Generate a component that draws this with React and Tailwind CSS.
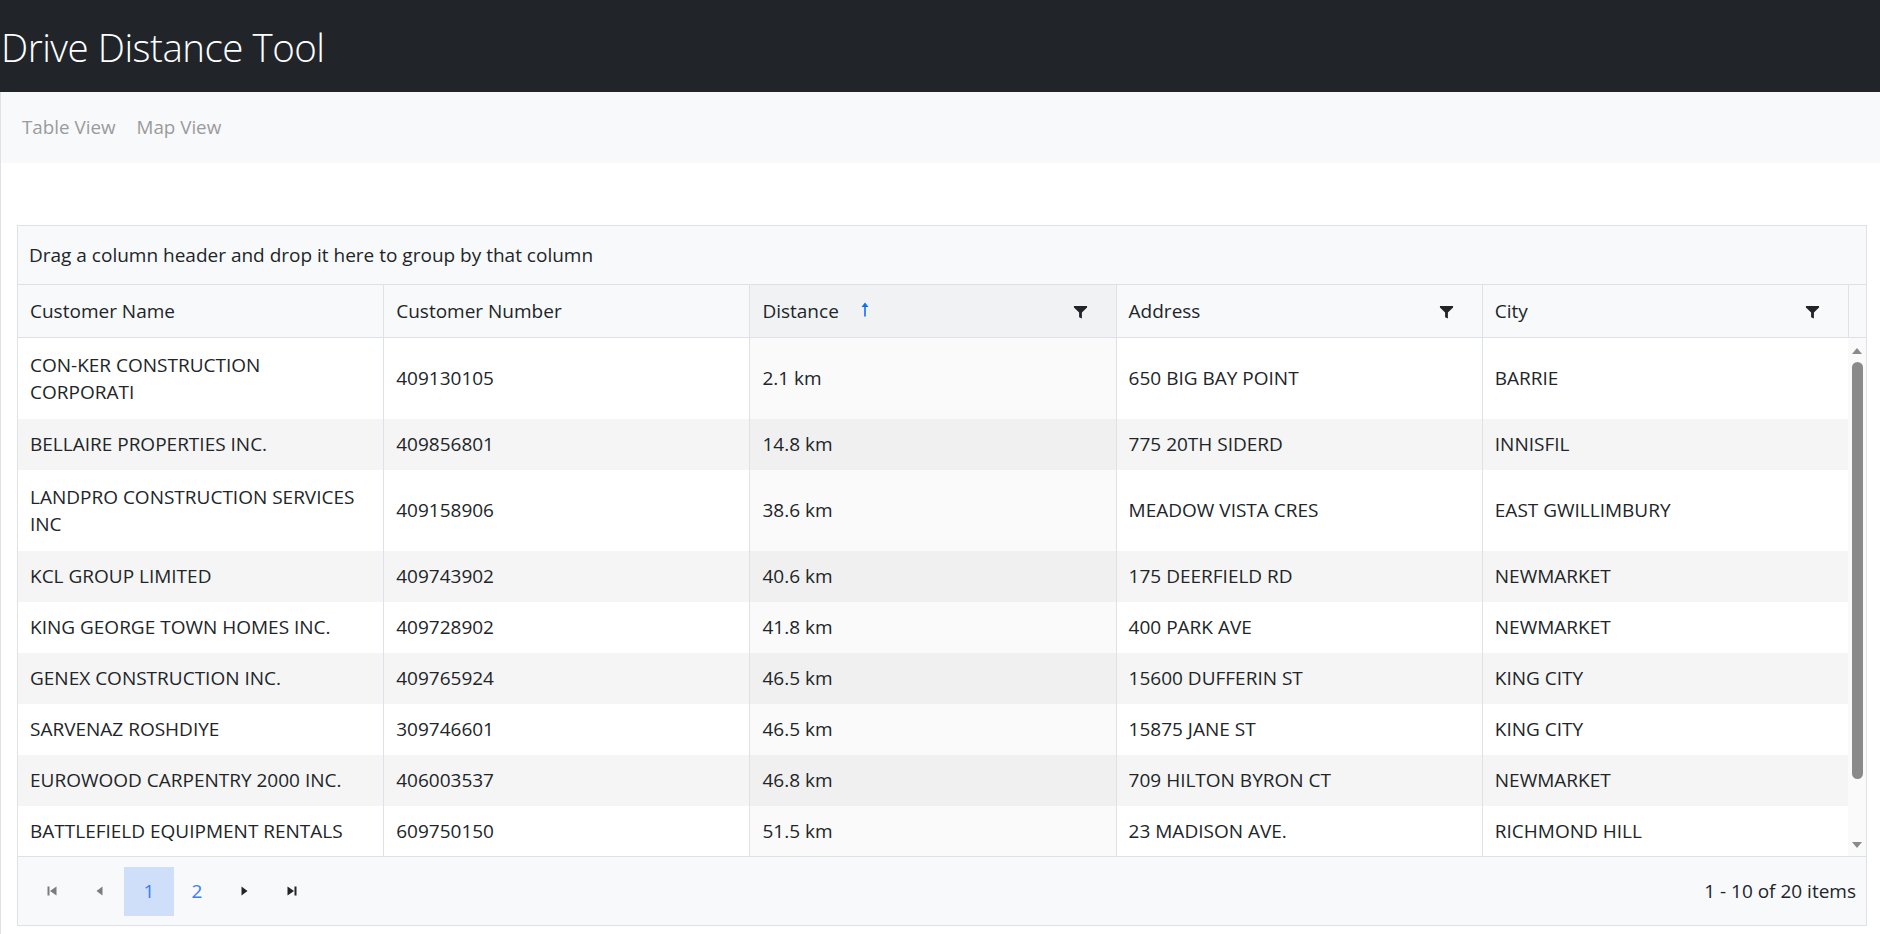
import React from 'react';

const rows = [
  { name: 'CON-KER CONSTRUCTION\nCORPORATI', number: '409130105', distance: '2.1 km', address: '650 BIG BAY POINT', city: 'BARRIE', tall: true },
  { name: 'BELLAIRE PROPERTIES INC.', number: '409856801', distance: '14.8 km', address: '775 20TH SIDERD', city: 'INNISFIL' },
  { name: 'LANDPRO CONSTRUCTION SERVICES\nINC', number: '409158906', distance: '38.6 km', address: 'MEADOW VISTA CRES', city: 'EAST GWILLIMBURY', tall: true },
  { name: 'KCL GROUP LIMITED', number: '409743902', distance: '40.6 km', address: '175 DEERFIELD RD', city: 'NEWMARKET' },
  { name: 'KING GEORGE TOWN HOMES INC.', number: '409728902', distance: '41.8 km', address: '400 PARK AVE', city: 'NEWMARKET' },
  { name: 'GENEX CONSTRUCTION INC.', number: '409765924', distance: '46.5 km', address: '15600 DUFFERIN ST', city: 'KING CITY' },
  { name: 'SARVENAZ ROSHDIYE', number: '309746601', distance: '46.5 km', address: '15875 JANE ST', city: 'KING CITY' },
  { name: 'EUROWOOD CARPENTRY 2000 INC.', number: '406003537', distance: '46.8 km', address: '709 HILTON BYRON CT', city: 'NEWMARKET' },
  { name: 'BATTLEFIELD EQUIPMENT RENTALS', number: '609750150', distance: '51.5 km', address: '23 MADISON AVE.', city: 'RICHMOND HILL' },
];

// icono de filtro (embudo)
const FilterIcon = () => (
  <svg width="15" height="15" viewBox="0 0 16 16" fill="#212529">
    <path d="M1 2h14v1.7L9.5 9v6.5l-3-1.5V9L1 3.7z" />
  </svg>
);

const SortUp = () => (
  <svg width="8" height="15" viewBox="0 0 8 14" fill="#0d6efd">
    <path d="M4 0L7.5 4.5H4.8V14H3.2V4.5H0.5z" />
  </svg>
);

const PagerIcon = ({ type, disabled }) => {
  const color = disabled ? '#7a7d80' : '#212529';
  return (
    <svg width="12" height="12" viewBox="0 0 12 12" fill={color}>
      {type === 'first' && <><rect x="1.5" y="1.5" width="2" height="9" /><path d="M10.5 1.5v9L4 6z" /></>}
      {type === 'prev' && <path d="M8.5 1.5v9L2.5 6z" />}
      {type === 'next' && <path d="M3.5 1.5v9L9.5 6z" />}
      {type === 'last' && <><path d="M1.5 1.5v9L8 6z" /><rect x="8.5" y="1.5" width="2" height="9" /></>}
    </svg>
  );
};

const HeaderCell = ({ label, sorted, filter, first }) => (
  <div className={`flex-1 h-full flex items-center px-3 ${first ? '' : 'border-l border-[#dee2e6]'} ${sorted ? 'bg-[#f1f2f4]' : ''}`}>
    <span>{label}</span>
    {sorted && <span className="ml-[22px] mb-[4px]"><SortUp /></span>}
    {filter && <span className="ml-auto mr-[16px]"><FilterIcon /></span>}
  </div>
);

const App = () => {
  return (
    <div className="min-h-screen bg-white text-[#212529] font-['Open_Sans',sans-serif] text-[19px]">
      <header className="h-[92px] bg-[#212529] flex items-center pl-[1px]">
        <h1 className="text-white font-light text-[38.5px] leading-none mt-[2px] tracking-[-0.5px]">Drive Distance Tool</h1>
      </header>

      <div className="border-l border-[#dee2e6] min-h-[842px]">
        <nav className="h-[71px] bg-[#f8f9fa] flex items-center gap-[21px] pl-[21px] text-[18.8px] text-[#9a9b9d]">
          <span>Table View</span>
          <span>Map View</span>
        </nav>

        <div className="pt-[62px] pl-[16px]">
          <div className="w-[1850px] border border-[#dee2e6]">
            {/* zona de agrupación */}
            <div className="h-[58px] bg-[#f8f9fa] flex items-center pl-[11px] pr-3">
              Drag a column header and drop it here to group by that column
            </div>

            {/* encabezados */}
            <div className="h-[53px] bg-[#f8f9fa] border-t border-[#dee2e6] flex">
              <HeaderCell label="Customer Name" first />
              <HeaderCell label="Customer Number" />
              <HeaderCell label="Distance" sorted filter />
              <HeaderCell label="Address" filter />
              <HeaderCell label="City" filter />
              <div className="w-[18px] border-l border-[#dee2e6]" />
            </div>

            {/* filas */}
            <div className="h-[519px] overflow-hidden border-t border-[#dee2e6] flex">
              <div className="flex-1">
                {rows.map((r, i) => {
                  const striped = i % 2 === 1;
                  return (
                    <div key={i} className={`flex ${r.tall ? 'h-[81px]' : 'h-[51px]'} ${striped ? 'bg-[#f5f5f5]' : 'bg-white'}`}>
                      <div className="flex-1 flex items-center px-3 whitespace-pre-line leading-[27px]">{r.name}</div>
                      <div className="flex-1 flex items-center px-3 border-l border-[#dee2e6]">{r.number}</div>
                      <div className={`flex-1 flex items-center px-3 border-l border-[#dee2e6] ${striped ? 'bg-[#f0f0f0]' : 'bg-[#fafafa]'}`}>{r.distance}</div>
                      <div className="flex-1 flex items-center px-3 border-l border-[#dee2e6]">{r.address}</div>
                      <div className="flex-1 flex items-center px-3 border-l border-[#dee2e6]">{r.city}</div>
                    </div>
                  );
                })}
              </div>
              {/* barra de desplazamiento */}
              <div className="w-[18px] bg-[#fafafa] flex flex-col items-center pt-[10px] pb-[8px]">
                <svg width="10" height="6" viewBox="0 0 10 6" fill="#8a8a8a"><path d="M5 0l5 6H0z" /></svg>
                <div className="w-[11px] h-[417px] mt-[8px] rounded-full bg-[#8a8a8a]" />
                <div className="flex-1" />
                <svg width="10" height="6" viewBox="0 0 10 6" fill="#8a8a8a"><path d="M0 0h10L5 6z" /></svg>
              </div>
            </div>

            {/* paginador */}
            <div className="h-[69px] bg-[#f8f9fa] border-t border-[#dee2e6] flex items-center pl-[10px] pr-[10px]">
              <div className="flex items-center">
                <span className="w-[48px] h-[49px] flex items-center justify-center"><PagerIcon type="first" disabled /></span>
                <span className="w-[48px] h-[49px] flex items-center justify-center"><PagerIcon type="prev" disabled /></span>
                <span className="w-[50px] h-[49px] flex items-center justify-center bg-[#cfdff9] text-[#3b7cf6] text-[19px]">1</span>
                <span className="w-[46px] h-[49px] flex items-center justify-center text-[#3b7cf6] text-[19px]">2</span>
                <span className="w-[48px] h-[49px] flex items-center justify-center"><PagerIcon type="next" /></span>
                <span className="w-[48px] h-[49px] flex items-center justify-center"><PagerIcon type="last" /></span>
              </div>
              <span className="ml-auto">1 - 10 of 20 items</span>
            </div>
          </div>
        </div>
      </div>
    </div>
  );
};

export default App;
